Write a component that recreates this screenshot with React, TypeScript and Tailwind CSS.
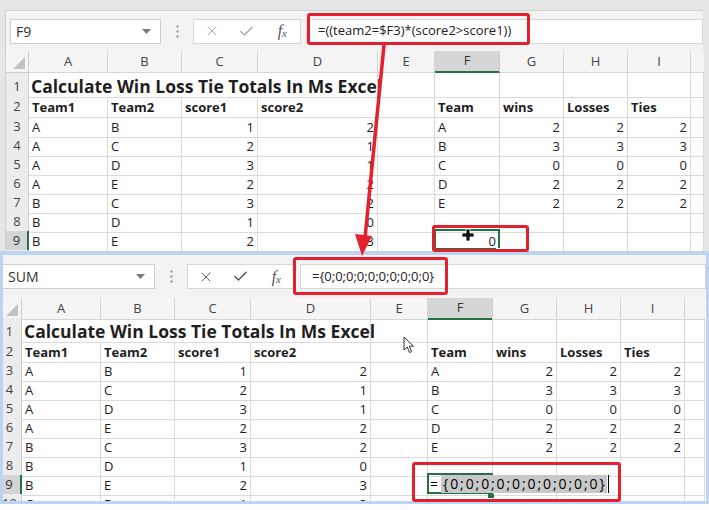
import { X, Check } from "lucide-react";

type Cell = string | number;

const letters = ["A", "B", "C", "D", "E", "F", "G", "H", "I"];
const heads = ["Team1", "Team2", "score1", "score2", "", "Team", "wins", "Losses", "Ties"];
const rows: Cell[][] = [
  ["A", "B", 1, 2, "", "A", 2, 2, 2],
  ["A", "C", 2, 1, "", "B", 3, 3, 3],
  ["A", "D", 3, 1, "", "C", 0, 0, 0],
  ["A", "E", 2, 2, "", "D", 2, 2, 2],
  ["B", "C", 3, 2, "", "E", 2, 2, 2],
  ["B", "D", 1, 0, "", "", "", "", ""],
  ["B", "E", 2, 3, "", "", "", "", ""],
  ["C", "D", 1, 3, "", "", "", "", ""],
];

const font = "font-['Open_Sans',_'Liberation_Sans',_sans-serif]";
const cellBase = "border-r border-b border-[#dadada] text-[13px] leading-none text-[#1e1e1e] flex items-end pb-[3px] px-[3px] whitespace-nowrap";

function FormulaBar({ top, name, formula }: { top: boolean; name: string; formula: string }) {
  const icon = top ? "text-[#a8a8a8]" : "text-[#555]";
  return (
    <div className={top ? "flex items-center h-[40px]" : "flex items-center h-[43px]"}>
      <div
        className={
          top
            ? "ml-[4px] w-[151px] h-[25px] bg-white border border-[#cfcfcf] flex items-center justify-between pl-[5px] pr-[9px]"
            : "w-[152px] h-[25px] bg-white border-y border-r border-[#cfcfcf] flex items-center justify-between pl-[5px] pr-[9px]"
        }
      >
        <span className="text-[14px] text-[#333]">{name}</span>
        <svg width="9" height="5" viewBox="0 0 9 5">
          <path d="M0 0 L9 0 L4.5 5 Z" fill="#7a7a7a" />
        </svg>
      </div>
      <div className="w-[32px] flex justify-center">
        <svg width="3" height="13" viewBox="0 0 3 13">
          <circle cx="1.5" cy="1.5" r="1.2" fill="#a0a0a0" />
          <circle cx="1.5" cy="6.5" r="1.2" fill="#a0a0a0" />
          <circle cx="1.5" cy="11.5" r="1.2" fill="#a0a0a0" />
        </svg>
      </div>
      <div className="w-[108px] h-[25px] bg-white border border-[#d6d6d6] flex items-center">
        <div className={`flex-1 flex justify-center ${icon}`}>
          <X size={16} strokeWidth={1.4} />
        </div>
        <div className={`flex-1 flex justify-center ${icon}`}>
          <Check size={17} strokeWidth={2} />
        </div>
        <div className="flex-1 flex justify-center items-center text-[16px] leading-none italic text-[#555] font-['Liberation_Serif',_serif]">
          f<span className="text-[11px] mt-[5px]">x</span>
        </div>
      </div>
      <div className="ml-[5px] flex-1 h-[25px] bg-white border border-[#d6d6d6] flex items-center pl-[11px] text-[13px] text-[#222]">
        {formula}
      </div>
    </div>
  );
}

function Sheet({ top }: { top: boolean }) {
  const cols = top
    ? "grid grid-cols-[23px_79px_74px_76px_120px_57px_65px_64px_64px_63px_13px]"
    : "grid grid-cols-[19px_79px_74px_76px_120px_57px_65px_64px_64px_64px_20px]";
  const rh = "bg-[#ececec] border-r border-b border-[#cdcdcd] text-[13px] text-[#444] flex items-center justify-center";
  const rhPad = top ? "" : "pr-[5px]";
  return (
    <div>
      {/* column headers */}
      <div className={`${cols} ${top ? "h-[22px]" : "h-[20px]"}`}>
        <div className="bg-[#f5f5f5] border-r border-b border-[#cdcdcd] flex items-end justify-end pr-[3px] pb-[3px]">
          <svg width="12" height="12" viewBox="0 0 12 12">
            <path d="M12 0 L12 12 L0 12 Z" fill="#c2c2c2" />
          </svg>
        </div>
        {letters.map((l) => (
          <div
            key={l}
            className={
              l === "F"
                ? "bg-[#d6d6d6] border-r border-b-2 border-r-[#cdcdcd] border-b-[#217346] text-[13px] text-[#333] flex items-center justify-center"
                : "bg-[#f5f5f5] border-r border-b border-[#d4d4d4] text-[13px] text-[#444] flex items-center justify-center"
            }
          >
            {l}
          </div>
        ))}
        <div className="bg-[#f5f5f5] border-b border-[#d4d4d4]" />
      </div>
      {/* row 1 */}
      <div className={`${cols} h-[24px]`}>
        <div className={`${rh} ${rhPad} pt-[4px]`}>1</div>
        <div className="col-span-4 border-r border-b border-[#dadada] flex items-end pb-[1px] px-[2px] whitespace-nowrap font-bold text-[17.5px] leading-none text-[#1f1f1f]">
          Calculate Win Loss Tie Totals In Ms Excel
        </div>
        {[0, 1, 2, 3, 4, 5].map((i) => (
          <div key={i} className={cellBase} />
        ))}
      </div>
      {/* row 2 */}
      <div className={`${cols} ${top ? "h-[20px]" : "h-[19px]"}`}>
        <div className={`${rh} ${rhPad}`}>2</div>
        {heads.map((h, i) => (
          <div key={i} className={`${cellBase} font-bold`}>
            {h}
          </div>
        ))}
        <div className={cellBase} />
      </div>
      {rows.map((r, ri) => {
        const n = ri + 3;
        const sel = n === 9;
        return (
          <div key={n} className={`${cols} h-[19px]`}>
            <div
              className={
                sel
                  ? `bg-[#d4d4d4] border-r-2 border-b border-r-[#217346] border-b-[#cdcdcd] text-[13px] text-[#333] flex items-center justify-center ${rhPad}`
                  : `${rh} ${rhPad}`
              }
            >
              {n}
            </div>
            {r.map((v, ci) => {
              if (sel && ci === 5) {
                return top ? (
                  <div key={ci} className={`${cellBase} justify-end relative`}>
                    0
                    <div className="absolute -left-[1px] -top-[2px] w-[66px] h-[21px] border-2 border-[#217346]" />
                    <div className="absolute -right-[3px] -bottom-[3px] w-[6px] h-[6px] bg-[#217346] border border-white" />
                  </div>
                ) : (
                  <div key={ci} className={`${cellBase} relative`}>
                    <div className="absolute -left-[1px] -top-[2px] w-[66px] h-[21px] border-2 border-[#217346]" />
                    <div className="absolute right-[-2px] -bottom-[3px] w-[6px] h-[4px] bg-[#217346]" />
                    <div className="absolute left-[2px] top-[0px] h-[18px] flex items-center z-10 text-[14px] text-black">
                      <span className="mr-[3px]">=</span>
                      <span className="bg-[#c8c8c8] tracking-[1.9px] h-[18px] flex items-center pl-[2px]">
                        {"{0;0;0;0;0;0;0;0;0;0}"}
                      </span>
                      <span className="inline-block w-px h-[18px] bg-black ml-[1px]" />
                    </div>
                  </div>
                );
              }
              return (
                <div key={ci} className={`${cellBase} ${typeof v === "number" ? "justify-end" : ""}`}>
                  {v}
                </div>
              );
            })}
            <div className={cellBase} />
          </div>
        );
      })}
    </div>
  );
}

export default function App() {
  return (
    <div className={`relative w-[709px] h-[510px] overflow-hidden bg-[#e6e6e6] ${font}`}>
      {/* top window */}
      <div className="h-[251px] overflow-hidden pt-[10px] pl-[5px]">
        <div className="w-[698px] bg-[#f3f3f3] border-l border-t border-[#d2d2d2]">
          <FormulaBar top name="F9" formula="=((team2=$F3)*(score2>score1))" />
          <div className="bg-white">
            <Sheet top />
          </div>
        </div>
      </div>
      {/* bottom window */}
      <div className="border-t-4 border-x-[3px] border-b-[3px] border-[#bcd4f1] w-[709px]">
        <div className="h-[246px] overflow-hidden bg-[#f3f3f3]">
          <FormulaBar top={false} name="SUM" formula="={0;0;0;0;0;0;0;0;0;0}" />
          <div className="bg-white">
            <Sheet top={false} />
          </div>
        </div>
      </div>
      <div className="h-[6px] bg-white" />

      {/* annotations */}
      <div className="absolute left-[307px] top-[13px] w-[223px] h-[32px] border-[3px] border-[#e3202c] rounded-[3px]" />
      <div className="absolute left-[432px] top-[225px] w-[97px] h-[27px] border-[3px] border-[#e3202c] rounded-[3px]" />
      <div className="absolute left-[293px] top-[257px] w-[155px] h-[38px] border-[3px] border-[#e3202c] rounded-[3px]" />
      <div className="absolute left-[412px] top-[462px] w-[209px] h-[40px] border-[3px] border-[#e3202c] rounded-[3px]" />
      <svg className="absolute left-0 top-0 pointer-events-none" width="709" height="510">
        <line x1="384" y1="45" x2="365" y2="238" stroke="#e3202c" strokeWidth="3.5" />
        <path d="M362 256 L355 234 L372 236 Z" fill="#e3202c" />
      </svg>
      {/* fat cross cursor */}
      <svg className="absolute left-[462px] top-[229px]" width="12" height="12" viewBox="0 0 12 12">
        <path d="M4 0 H8 V4 H12 V8 H8 V12 H4 V8 H0 V4 H4 Z" fill="#111" stroke="#fff" strokeWidth="0.8" />
      </svg>
      {/* arrow pointer */}
      <svg className="absolute left-[403px] top-[336px]" width="12" height="18" viewBox="0 0 12 18">
        <path d="M1 1 L1 14 L4.2 11 L6.5 16.5 L8.6 15.6 L6.3 10.2 L10.5 10.2 Z" fill="#fff" stroke="#333" strokeWidth="1" />
      </svg>
    </div>
  );
}
